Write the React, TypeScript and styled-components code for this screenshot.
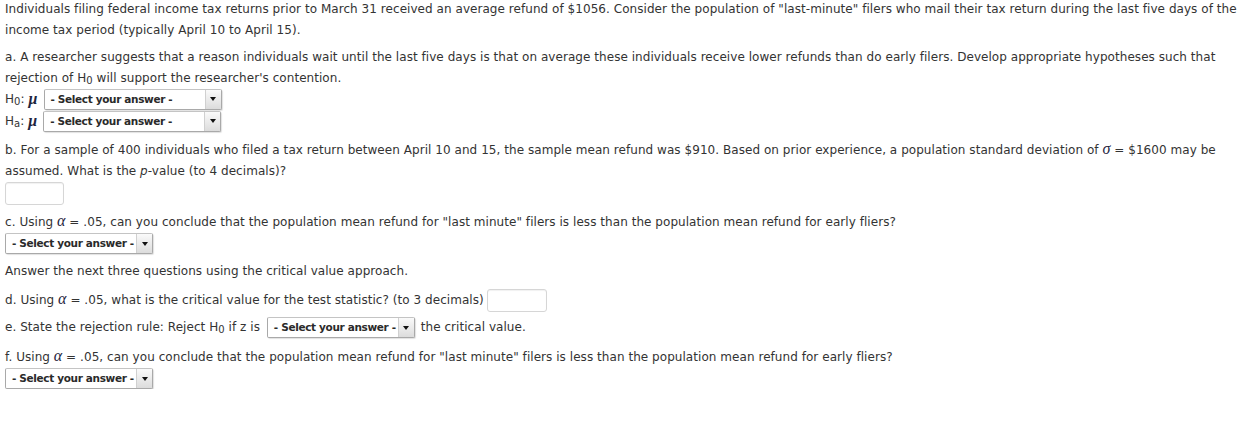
import React from "react";
import styled, { createGlobalStyle } from "styled-components";

const Global = createGlobalStyle`
  html, body { margin: 0; padding: 0; background: #fff; }
  body {
    font-family: "DejaVu Sans", Verdana, sans-serif;
    font-size: 12px;
    letter-spacing: 0.05px;
    color: #333;
  }
`;

const Page = styled.div`
  padding: 0 5px;
  margin-top: -1px;
`;

const Block = styled.div<{ $gap?: number }>`
  line-height: 21px;
  white-space: nowrap;
  margin-bottom: ${(p) => p.$gap ?? 7}px;
`;

const Row = styled.div<{ $gap?: number }>`
  display: flex;
  align-items: center;
  height: 22px;
  margin-bottom: ${(p) => p.$gap ?? 0}px;
`;

const InlineRow = styled.div<{ $gap?: number }>`
  line-height: 22px;
  min-height: 22px;
  white-space: nowrap;
  margin-bottom: ${(p) => p.$gap ?? 7}px;
`;

const Sub = styled.sub`
  font-size: 10px;
  vertical-align: -2px;
  line-height: 0;
`;

const Greek = styled.span`
  font-family: "Liberation Serif", "DejaVu Serif", serif;
  font-style: italic;
  font-size: 16px;
  line-height: 1;
  color: #1f2540;
  letter-spacing: 0;
`;

const Mu = styled(Greek)`
  font-weight: bold;
  margin: 0 6px 0 4px;
`;

const SelectBox = styled.span<{ $w: number }>`
  display: inline-flex;
  align-items: stretch;
  box-sizing: border-box;
  width: ${(p) => p.$w}px;
  height: 21px;
  border: 1px solid #a9a9a9;
  border-top-color: #c4c4c4;
  border-radius: 2px;
  background: #fff;
  box-shadow: 1px 1px 1px rgba(0, 0, 0, 0.12);
  vertical-align: middle;
  line-height: 19px;
`;

const SelectLabel = styled.span`
  flex: 1;
  font-family: "DejaVu Sans", Verdana, sans-serif;
  font-weight: bold;
  font-size: 10.5px;
  letter-spacing: -0.35px;
  color: #2a2a2a;
  line-height: 19px;
  padding-left: 6px;
  white-space: nowrap;
  overflow: hidden;
`;

const Arrow = styled.span`
  flex: none;
  width: 15px;
  display: flex;
  align-items: center;
  justify-content: center;
  background: linear-gradient(#fafafa, #dcdcdc);
  border-left: 1px solid #d0d0d0;
  &::after {
    content: "";
    border-left: 3.5px solid transparent;
    border-right: 3.5px solid transparent;
    border-top: 4px solid #111;
  }
`;

const TextInput = styled.span<{ $w: number }>`
  display: inline-block;
  box-sizing: border-box;
  width: ${(p) => p.$w}px;
  height: 23px;
  border: 1px solid #d6d6d6;
  border-radius: 3px;
  background: #fff;
  box-shadow: inset 0 1px 1px rgba(0, 0, 0, 0.06);
  vertical-align: middle;
`;

const Select = ({ w }: { w: number }) => (
  <SelectBox $w={w}>
    <SelectLabel>- Select your answer -</SelectLabel>
    <Arrow />
  </SelectBox>
);

const Spacer = styled.span<{ $w: number }>`
  display: inline-block;
  width: ${(p) => p.$w}px;
`;

export default function App() {
  return (
    <>
      <Global />
      <Page>
        <Block $gap={6}>
          Individuals filing federal income tax returns prior to March 31 received an average refund of $1056. Consider the
          population of "last-minute" filers who mail their tax return during the last five days of the
          <br />
          income tax period (typically April 10 to April 15).
        </Block>
        <Block $gap={-1}>
          a. A researcher suggests that a reason individuals wait until the last five days is that on average these
          individuals receive lower refunds than do early filers. Develop appropriate hypotheses such that
          <br />
          rejection of H<Sub>0</Sub> will support the researcher's contention.
        </Block>
        <Row>
          <span>
            H<Sub>0</Sub>:
          </span>
          <Mu>μ</Mu>
          <Select w={178} />
        </Row>
        <Row $gap={8}>
          <span>
            H<Sub>a</Sub>:
          </span>
          <Mu>μ</Mu>
          <Select w={178} />
        </Row>
        <Block $gap={0}>
          b. For a sample of 400 individuals who filed a tax return between April 10 and 15, the sample mean refund was
          $910. Based on prior experience, a population standard deviation of <Greek>σ</Greek> = $1600 may be
          <br />
          assumed. What is the <i>p</i>-value (to 4 decimals)?
        </Block>
        <InlineRow $gap={7}>
          <TextInput $w={59} />
        </InlineRow>
        <Block $gap={-1}>
          c. Using <Greek>α</Greek> = .05, can you conclude that the population mean refund for "last minute" filers is less
          than the population mean refund for early fliers?
        </Block>
        <InlineRow $gap={7}>
          <Select w={148} />
        </InlineRow>
        <Block $gap={7}>Answer the next three questions using the critical value approach.</Block>
        <InlineRow $gap={4}>
          d. Using <Greek>α</Greek> = .05, what is the critical value for the test statistic? (to 3 decimals)
          <Spacer $w={3} />
          <TextInput $w={60} />
        </InlineRow>
        <InlineRow $gap={9}>
          e. State the rejection rule: Reject H<Sub>0</Sub> if z is <Spacer $w={3} />
          <Select w={148} />
          <Spacer $w={2} /> the critical value.
        </InlineRow>
        <Block $gap={-1}>
          f. Using <Greek>α</Greek> = .05, can you conclude that the population mean refund for "last minute" filers is less
          than the population mean refund for early fliers?
        </Block>
        <InlineRow $gap={0}>
          <Select w={148} />
        </InlineRow>
      </Page>
    </>
  );
}
